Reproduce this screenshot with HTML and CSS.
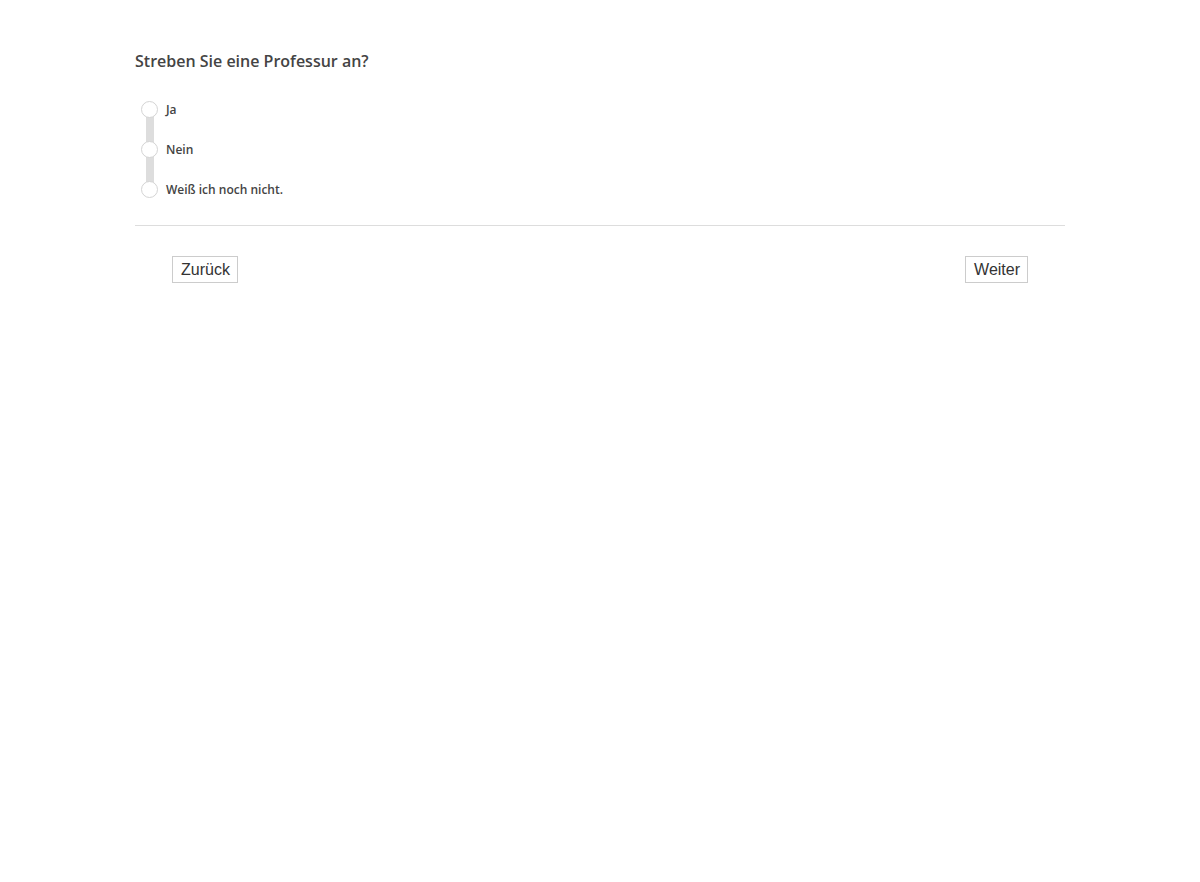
FILE: index.html
```html
<!DOCTYPE html>
<html lang="de">
<head>
<meta charset="utf-8">
<title>Umfrage</title>
<link rel="stylesheet" href="styles.css">
</head>
<body>
<div class="page">
  <form class="question">
    <h1 class="question-title">Streben Sie eine Professur an?</h1>
    <div class="options">
      <label class="option"><span class="radio"></span><span class="option-text">Ja</span></label>
      <label class="option"><span class="radio"></span><span class="option-text">Nein</span></label>
      <label class="option"><span class="radio"></span><span class="option-text">Weiß ich noch nicht.</span></label>
    </div>
  </form>
  <div class="nav">
    <button class="btn" type="button">Zurück</button>
    <button class="btn" type="button">Weiter</button>
  </div>
</div>
</body>
</html>
```
FILE: styles.css
```css
html, body {
  margin: 0;
  padding: 0;
  background: #fff;
}
.page {
  width: 930px;
  margin-left: 135px;
  padding-top: 51px;
}
.question {
  border-bottom: 1px solid #dddddd;
  padding-bottom: 27px;
}
.question-title {
  margin: 0 0 30px 0;
  font-family: "Open Sans", sans-serif;
  font-weight: 600;
  font-size: 16px;
  line-height: 20px;
  color: #444;
}
.options {
  position: relative;
  display: flex;
  flex-direction: column;
  gap: 23px;
  padding-left: 6px;
}
.options::before {
  content: "";
  position: absolute;
  left: 11px;
  top: 10px;
  bottom: 10px;
  width: 8px;
  background: #dddddd;
}
.option {
  position: relative;
  display: flex;
  align-items: center;
  gap: 8px;
  height: 17px;
  font-family: "Open Sans", sans-serif;
  font-weight: 600;
  font-size: 12px;
  color: #444;
}
.radio {
  width: 15px;
  height: 15px;
  border: 1px solid #d4d4d4;
  border-radius: 50%;
  background: #fff;
  flex: none;
}
.nav {
  display: flex;
  justify-content: space-between;
  padding: 30px 37px 0 37px;
}
.btn {
  font-family: "Liberation Sans", Arial, sans-serif;
  font-size: 16px;
  color: #333;
  background: #fff;
  border: 1px solid #cccccc;
  border-radius: 0;
  height: 27px;
  padding: 0 7px 0 8px;
  line-height: 25px;
}
```
